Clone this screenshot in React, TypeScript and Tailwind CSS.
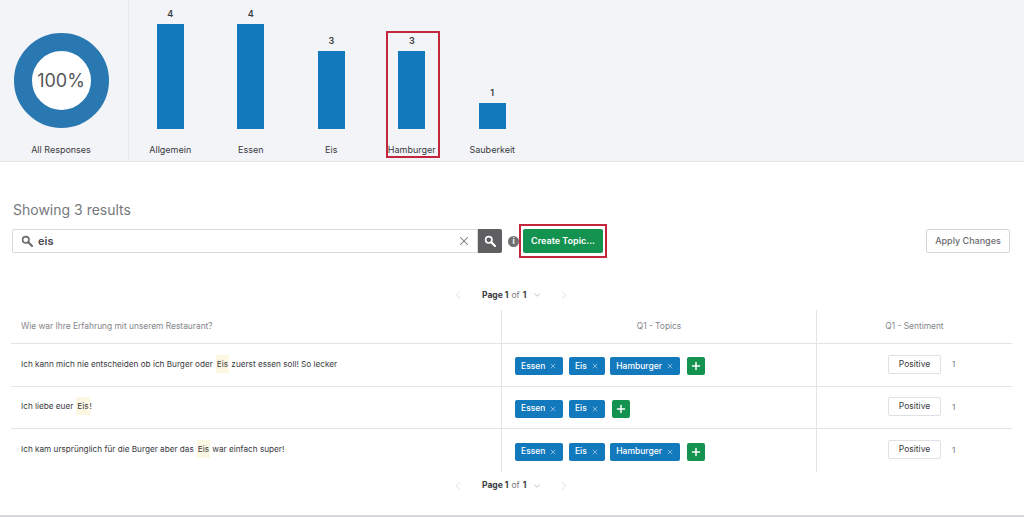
import { ChevronDown, ChevronLeft, ChevronRight, Plus, X } from "lucide-react";

const bars = [
  { label: "Allgemein", count: 4, height: "h-[105px]" },
  { label: "Essen", count: 4, height: "h-[105px]" },
  { label: "Eis", count: 3, height: "h-[78px]" },
  { label: "Hamburger", count: 3, height: "h-[78px]" },
  { label: "Sauberkeit", count: 1, height: "h-[26px]" },
];

const rows = [
  { before: "Ich kann mich nie entscheiden ob ich Burger oder", after: " zuerst essen soll! So lecker", topics: ["Essen", "Eis", "Hamburger"] },
  { before: "Ich liebe euer", after: "!", topics: ["Essen", "Eis"] },
  { before: "Ich kam ursprünglich für die Burger aber das", after: " war einfach super!", topics: ["Essen", "Eis", "Hamburger"] },
];

function SearchGlyph({ className }: { className: string }) {
  return (
    <svg viewBox="0 0 12 12" width="12" height="12" fill="none" stroke="currentColor" className={className}>
      <circle cx="4.8" cy="4.8" r="3.2" strokeWidth="1.6" />
      <path d="M7.3 7.3L11 11" strokeWidth="2.2" strokeLinecap="round" />
    </svg>
  );
}

function Pager() {
  return (
    <div className="flex h-[20px] items-center justify-center pr-[2px] text-[#d3d5d9]">
      <ChevronLeft size={14} strokeWidth={1.25} />
      <div className="ml-[17px] flex w-[50px] items-center text-[8.5px] text-[#3a3a3e]">
        <span className="font-bold">Page 1</span>
        <span className="mx-[3px] text-[#77787d]">of</span>
        <span className="font-bold">1</span>
      </div>
      <ChevronDown size={10} strokeWidth={1.25} className="text-[#85868a]" />
      <ChevronRight size={14} strokeWidth={1.25} className="ml-[15px]" />
    </div>
  );
}

function TopicTag({ name }: { name: string }) {
  return (
    <span className="flex h-[18px] items-center gap-[4px] rounded-[2px] bg-[#1279bd] px-[6px] text-[8.5px] font-medium text-white">
      {name}
      <X size={8} strokeWidth={1.75} className="text-[#d5e6f3]" />
    </span>
  );
}

export default function App() {
  return (
    <div className="flex h-[517px] w-[1024px] flex-col overflow-hidden bg-white font-['Inter',sans-serif] text-[#3a3a3e]">
      <div className="flex h-[162px] shrink-0 border-b border-[#e3e4e8] bg-[#f3f4f8]">
        <div className="flex w-[129px] shrink-0 flex-col items-center border-r border-[#e6e7eb] pr-[6px] pt-[33px]">
          <div className="flex h-[95px] w-[95px] items-center justify-center rounded-full border-[18px] border-[#2a78b1] bg-white text-[18px] text-[#55565a]">
            100%
          </div>
          <div className="mt-[15px] text-[9px]">All Responses</div>
        </div>
        <div className="flex pl-[1px]">
          {bars.map((b) => (
            <div key={b.label} className="relative flex w-[80.5px] flex-col items-center">
              {b.label === "Hamburger" && (
                <div className="absolute left-[14px] top-[31px] h-[127px] w-[54px] border-2 border-[#c3263a]" />
              )}
              <div className="flex h-[129px] flex-col items-center justify-end">
                <div className="mb-[5px] text-[9px] font-semibold leading-[11px]">{b.count}</div>
                <div className={`w-[27px] bg-[#1279bd] ${b.height}`} />
              </div>
              <div className="mt-[14px] text-[9px]">{b.label}</div>
            </div>
          ))}
        </div>
      </div>

      <div className="pl-[13px] pt-[39px] text-[14px] leading-[17px] text-[#77787d]">Showing 3 results</div>

      <div className="mt-[10px] flex h-[26px] items-center pl-[12px] pr-[14px]">
        <div className="flex h-[24px] w-[466px] items-center rounded-l-[2px] border border-[#d9dadd] pl-[8px] pr-[6px]">
          <SearchGlyph className="text-[#6b6c70]" />
          <span className="ml-[5px] flex-1 text-[11px] font-semibold text-[#45464a]">eis</span>
          <X size={14} strokeWidth={1.75} className="text-[#77787d]" />
        </div>
        <div className="flex h-[24px] w-[24px] items-center justify-center rounded-r-[2px] bg-[#5f5f61]">
          <SearchGlyph className="text-white" />
        </div>
        <div className="ml-[6px] flex h-[11px] w-[11px] items-center justify-center rounded-full bg-[#6f7073] text-[8px] font-bold text-white">
          i
        </div>
        <div className="border-2 border-[#c3263a] px-[2px] py-[3px]">
          <div className="flex h-[24px] w-[80px] items-center justify-center rounded-[2px] bg-[#13934f] text-[9px] font-semibold text-white">
            Create Topic...
          </div>
        </div>
        <div className="ml-auto flex h-[24px] w-[84px] items-center justify-center rounded-[2px] border border-[#d4d5d8] text-[9px] font-medium text-[#6b6c70]">
          Apply Changes
        </div>
      </div>

      <div className="mt-[31px]">
        <Pager />
      </div>

      <div className="ml-[11px] mt-[5px] w-[1001px]">
        <div className="grid h-[34px] grid-cols-[491px_315px_195px] border-b border-[#e3e4e8] text-[8.4px] text-[#85868a]">
          <div className="flex items-center border-r border-[#e3e4e8] pl-[10px]">Wie war Ihre Erfahrung mit unserem Restaurant?</div>
          <div className="flex items-center justify-center border-r border-[#e3e4e8]">Q1 - Topics</div>
          <div className="flex items-center justify-center">Q1 - Sentiment</div>
        </div>
        {rows.map((row, i) => (
          <div
            key={row.before}
            className={`grid h-[42.5px] grid-cols-[491px_315px_195px] ${i < 2 ? "border-b border-[#e3e4e8]" : ""}`}
          >
            <div className="flex items-center whitespace-pre border-r border-[#e3e4e8] pb-[2px] pl-[10px] text-[8.2px]">
              {row.before}
              <span className="ml-[3px] bg-[#fbf7e3] px-[1px] py-[3px]">Eis</span>
              {row.after}
            </div>
            <div className="flex items-center gap-[5.5px] border-r border-[#e3e4e8] pl-[13px] pt-[3px]">
              {row.topics.map((t) => (
                <TopicTag key={t} name={t} />
              ))}
              <span className="ml-[1.5px] flex h-[18px] w-[18px] items-center justify-center rounded-[2px] bg-[#13934f] text-white">
                <Plus size={12} strokeWidth={3} />
              </span>
            </div>
            <div className="flex items-center pb-[1px] pl-[71px]">
              <span className="flex h-[19px] w-[53px] items-center justify-center rounded-[2px] border border-[#e0e1e4] text-[8.5px]">
                Positive
              </span>
              <span className="ml-[11px] text-[8px] text-[#77787d]">1</span>
            </div>
          </div>
        ))}
      </div>

      <div className="mt-[4px]">
        <Pager />
      </div>
      <div className="mt-auto h-[2px] bg-[#d9dadd]" />
    </div>
  );
}
